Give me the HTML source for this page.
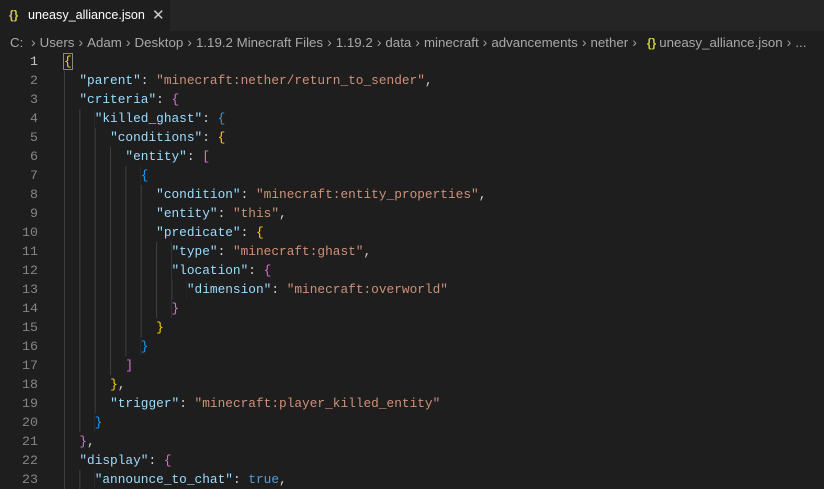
<!DOCTYPE html>
<html><head><meta charset="utf-8"><style>
body{margin:0;width:824px;height:481px;background:#1e1e1e;overflow:hidden;font-family:"Liberation Sans",sans-serif;}
.tabs{height:31px;background:#252526;position:relative}
.tab{position:absolute;left:0;top:0;width:170px;height:31px;background:#1e1e1e;color:#fff;font-size:12.6px;line-height:31px}
.tab .ic{position:absolute;left:9px;color:#cbcb41;font-weight:bold;font-size:12px}
.tab .nm{position:absolute;left:28px}
.tab .x{position:absolute;left:152px;font-size:15px;color:#ccc}
.bc{position:absolute;top:31px;left:10px;height:22px;line-height:22px;color:#a9a9a9;font-size:13.3px;white-space:nowrap}
.bc i{font-style:normal;color:#a0a0a0;margin:0 4px;font-size:14px}
.bc b{color:#cbcb41;font-size:12px;margin:0 3px 0 6px}
.code{position:absolute;top:52px;left:0;font-family:"Liberation Mono",monospace;font-size:12.8px}
.l{height:19px;line-height:19px;position:relative;white-space:pre}
.n{position:absolute;left:0;width:38px;text-align:right;color:#858585;font-size:13.3px}
.t{position:absolute;left:64px;color:#d4d4d4}
.g{display:inline-block;height:19px;vertical-align:top;background:linear-gradient(to right,#404040 0 1px,transparent 1px) 0 0/2ch 100% repeat-x}
.k{color:#9cdcfe}.s{color:#ce9178}.y{color:#ffd700}.p{color:#da70d6}.b{color:#179fff}.kw{color:#569cd6}
</style></head><body>
<div class="tabs"><div class="tab"><span class="ic">{}</span><span class="nm">uneasy_alliance.json</span><span class="x">✕</span></div></div>
<div class="bc">C: <i>›</i>Users<i>›</i>Adam<i>›</i>Desktop<i>›</i>1.19.2 Minecraft Files<i>›</i>1.19.2<i>›</i>data<i>›</i>minecraft<i>›</i>advancements<i>›</i>nether<i>›</i><b>{}</b>uneasy_alliance.json<i>›</i>...</div>
<div class="code">
<div class="l"><span class="n" style="color:#c6c6c6">1</span><span class="t"><span class="y" style="outline:1px solid #888">{</span></span></div>
<div class="l"><span class="n">2</span><span class="t"><span class="g" style="width:2ch"></span><span class="k">"parent"</span>: <span class="s">"minecraft:nether/return_to_sender"</span>,</span></div>
<div class="l"><span class="n">3</span><span class="t"><span class="g" style="width:2ch"></span><span class="k">"criteria"</span>: <span class="p">{</span></span></div>
<div class="l"><span class="n">4</span><span class="t"><span class="g" style="width:4ch"></span><span class="k">"killed_ghast"</span>: <span class="b">{</span></span></div>
<div class="l"><span class="n">5</span><span class="t"><span class="g" style="width:6ch"></span><span class="k">"conditions"</span>: <span class="y">{</span></span></div>
<div class="l"><span class="n">6</span><span class="t"><span class="g" style="width:8ch"></span><span class="k">"entity"</span>: <span class="p">[</span></span></div>
<div class="l"><span class="n">7</span><span class="t"><span class="g" style="width:10ch"></span><span class="b">{</span></span></div>
<div class="l"><span class="n">8</span><span class="t"><span class="g" style="width:12ch"></span><span class="k">"condition"</span>: <span class="s">"minecraft:entity_properties"</span>,</span></div>
<div class="l"><span class="n">9</span><span class="t"><span class="g" style="width:12ch"></span><span class="k">"entity"</span>: <span class="s">"this"</span>,</span></div>
<div class="l"><span class="n">10</span><span class="t"><span class="g" style="width:12ch"></span><span class="k">"predicate"</span>: <span class="y">{</span></span></div>
<div class="l"><span class="n">11</span><span class="t"><span class="g" style="width:14ch"></span><span class="k">"type"</span>: <span class="s">"minecraft:ghast"</span>,</span></div>
<div class="l"><span class="n">12</span><span class="t"><span class="g" style="width:14ch"></span><span class="k">"location"</span>: <span class="p">{</span></span></div>
<div class="l"><span class="n">13</span><span class="t"><span class="g" style="width:16ch"></span><span class="k">"dimension"</span>: <span class="s">"minecraft:overworld"</span></span></div>
<div class="l"><span class="n">14</span><span class="t"><span class="g" style="width:14ch"></span><span class="p">}</span></span></div>
<div class="l"><span class="n">15</span><span class="t"><span class="g" style="width:12ch"></span><span class="y">}</span></span></div>
<div class="l"><span class="n">16</span><span class="t"><span class="g" style="width:10ch"></span><span class="b">}</span></span></div>
<div class="l"><span class="n">17</span><span class="t"><span class="g" style="width:8ch"></span><span class="p">]</span></span></div>
<div class="l"><span class="n">18</span><span class="t"><span class="g" style="width:6ch"></span><span class="y">}</span>,</span></div>
<div class="l"><span class="n">19</span><span class="t"><span class="g" style="width:6ch"></span><span class="k">"trigger"</span>: <span class="s">"minecraft:player_killed_entity"</span></span></div>
<div class="l"><span class="n">20</span><span class="t"><span class="g" style="width:4ch"></span><span class="b">}</span></span></div>
<div class="l"><span class="n">21</span><span class="t"><span class="g" style="width:2ch"></span><span class="p">}</span>,</span></div>
<div class="l"><span class="n">22</span><span class="t"><span class="g" style="width:2ch"></span><span class="k">"display"</span>: <span class="p">{</span></span></div>
<div class="l"><span class="n">23</span><span class="t"><span class="g" style="width:4ch"></span><span class="k">"announce_to_chat"</span>: <span class="kw">true</span>,</span></div>
</div>
</body></html>
